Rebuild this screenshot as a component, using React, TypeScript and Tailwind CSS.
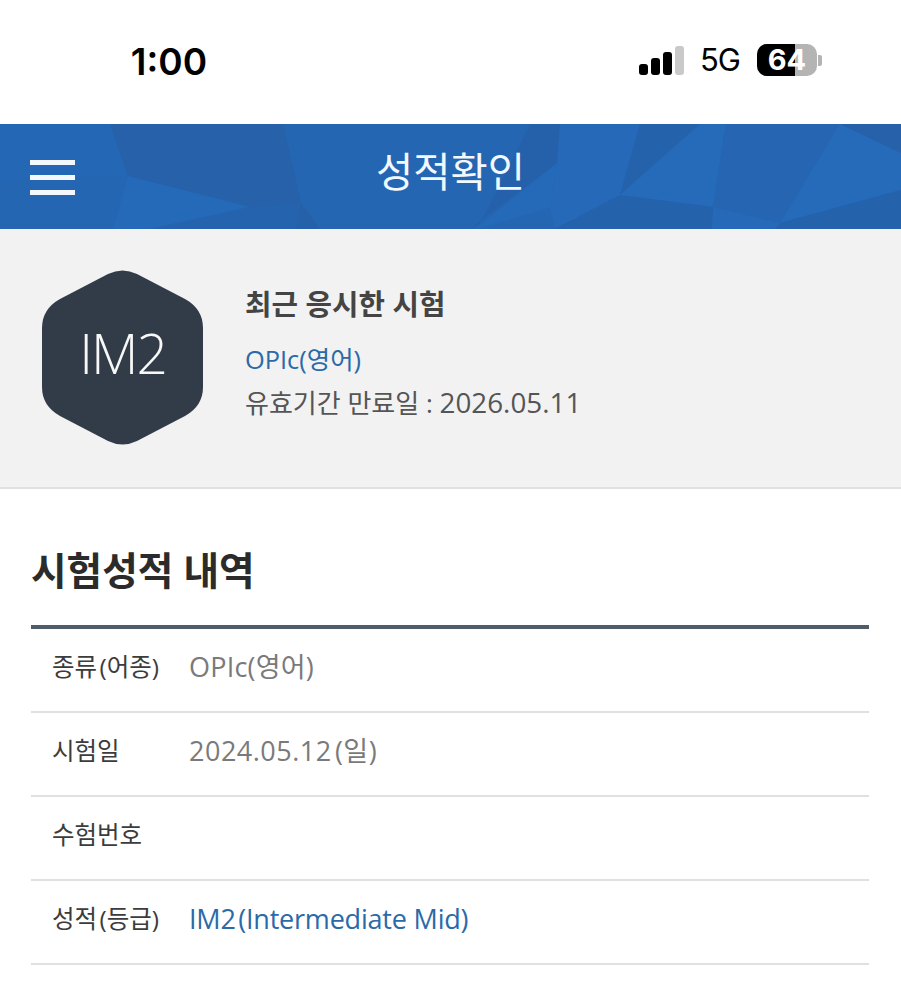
const fontKr = "font-['Open_Sans','Noto_Sans_CJK_KR',sans-serif]";

const rows = [
  { label: "종류\u200a(어종)", value: "OPIc(영어)", color: "text-[#7a7a7a] tracking-[0.2px]" },
  { label: "시험일", value: "2024.05.12\u200a(일)", color: "text-[#7a7a7a] tracking-[0.5px]" },
  { label: "수험번호", value: "", color: "text-[#7a7a7a]" },
  { label: "성적\u200a(등급)", value: "IM2\u200a(Intermediate Mid)", color: "text-[#2a6aa8] tracking-[-0.2px]" },
];

function StatusBar() {
  return (
    <div className="h-[124px] bg-white flex items-start pt-[40px] font-['Inter',sans-serif] text-black">
      <div className="w-[338px] text-center text-[37px] leading-[44px] font-semibold">1:00</div>
      <div className="flex-1 flex items-center pt-[3px] pl-[301px]">
        {/* signal */}
        <div className="flex items-end gap-[3px] h-[29px]">
          <div className="w-[9px] h-[11px] rounded-[3px] bg-black" />
          <div className="w-[9px] h-[17px] rounded-[3px] bg-black" />
          <div className="w-[9px] h-[23px] rounded-[3px] bg-black" />
          <div className="w-[9px] h-[29px] rounded-[3px] bg-[#c9c9c9]" />
        </div>
        <span className="ml-[16px] w-[39px] text-[31px] leading-[34px] font-normal tracking-[-1px]">5G</span>
        {/* battery */}
        <div className="ml-[18px] relative flex w-[60px] h-[32px] rounded-[10px] bg-[#b4b4b4]">
          <div className="w-[38px] bg-black rounded-l-[10px]" />
          <span className="absolute inset-0 text-center text-white text-[29px] leading-[32px] font-bold">64</span>
        </div>
        <div className="ml-[1px] w-[4px] h-[11px] rounded-r-[2px] bg-[#b4b4b4]" />
      </div>
    </div>
  );
}

function Header() {
  return (
    <div className="relative h-[105px] bg-[#2566b3] overflow-hidden">
      <svg className="absolute inset-0" width="901" height="105" viewBox="0 0 901 105">
        <polygon points="0,0 110,0 128,52 0,56" fill="#2467b5" />
        <polygon points="110,0 283,0 301,79 250,83 128,52" fill="#2661aa" />
        <polygon points="128,52 250,83 150,105 113,105" fill="#2569b9" />
        <polygon points="250,83 301,79 296,105 150,105" fill="#2563ae" />
        <polygon points="301,79 320,105 296,105" fill="#2561a9" />
        <polygon points="530,0 560,0 557,39 470,105 470,105 480,100" fill="#2561ab" />
        <polygon points="557,39 550,84 475,105" fill="#2569b9" />
        <polygon points="560,0 640,0 620,71 555,105 550,84 557,39" fill="#2569b8" />
        <polygon points="640,0 700,0 620,71" fill="#2562ac" />
        <polygon points="700,0 726,0 713,83 620,71" fill="#266bba" />
        <polygon points="726,0 840,0 780,99 713,83" fill="#2565b1" />
        <polygon points="840,0 901,29 901,66 780,99" fill="#266bba" />
        <polygon points="840,0 901,0 901,29" fill="#2661aa" />
        <polygon points="780,99 901,66 901,105 775,105" fill="#2562ac" />
        <polygon points="620,71 713,83 712,105 555,105" fill="#2562ac" />
        <polygon points="713,83 780,99 775,105 712,105" fill="#2569b8" />
      </svg>
      <div className="relative h-full flex items-center pb-[14px]">
        <div className="absolute left-[30px] top-[36px] w-[45px] flex flex-col gap-[10px]">
          <div className="h-[5px] bg-[#f2f8fc]" />
          <div className="h-[5px] bg-[#f2f8fc]" />
          <div className="h-[5px] bg-[#f2f8fc]" />
        </div>
        <h1 className="w-full text-center text-[40.5px] leading-[48px] font-normal text-[#f2f8fc] font-['Noto_Sans_CJK_KR',sans-serif]">
          성적확인
        </h1>
      </div>
    </div>
  );
}

function Badge() {
  return (
    <div className="relative w-[161px] h-[175px] flex items-center justify-center">
      <svg className="absolute inset-0" width="161" height="175" viewBox="0 0 161 175">
        <path
          d="M66 4 Q80.5 -3 95 4 L143 29 Q161 39 161 58 L161 117 Q161 136 143 146 L95 171 Q80.5 178 66 171 L18 146 Q0 136 0 117 L0 58 Q0 39 18 29 Z"
          fill="#323c49"
        />
      </svg>
      <span className="relative -mt-[9px] text-[55px] leading-[60px] text-[#f8f8f8] font-['Open_Sans',sans-serif] font-light tracking-[-2px]">
        IM2
      </span>
    </div>
  );
}

function Summary() {
  return (
    <div className={`h-[260px] bg-[#f2f2f2] border-b-2 border-[#e0e0e0] flex pl-[42px] pt-[41px] ${fontKr}`}>
      <Badge />
      <div className="ml-[42px] pt-[15px]">
        <div className="text-[28.8px] leading-[38px] font-bold text-[#444444]">최근 응시한 시험</div>
        <div className="mt-[18px] text-[25.4px] leading-[36px] text-[#2a6aa8]">OPIc(영어)</div>
        <div className="mt-[6px] text-[26px] leading-[38px] text-[#555555]">
          유효기간 만료일 : <span className="text-[27.8px]">2026.05.11</span>
        </div>
      </div>
    </div>
  );
}

export default function App() {
  return (
    <div className={`w-[901px] h-[1000px] bg-white overflow-hidden ${fontKr}`}>
      <StatusBar />
      <Header />
      <Summary />

      <section className="pl-[31px] pr-[32px]">
        <h2 className="mt-[53px] mb-[27px] text-[38.7px] leading-[56px] font-bold text-[#2b2b2b]">시험성적 내역</h2>
        <div className="border-t-4 border-[#4f5c69]">
          {rows.map((r) => (
            <div key={r.label} className="h-[84px] border-b-2 border-[#e0e0e0] flex items-center pl-[21px] pb-[6px]">
              <div className="w-[137px] text-[24.5px] leading-[36px] text-[#3c3c3c]">{r.label}</div>
              <div className={`text-[27px] leading-[38px] ${r.color}`}>{r.value}</div>
            </div>
          ))}
        </div>
      </section>
    </div>
  );
}
